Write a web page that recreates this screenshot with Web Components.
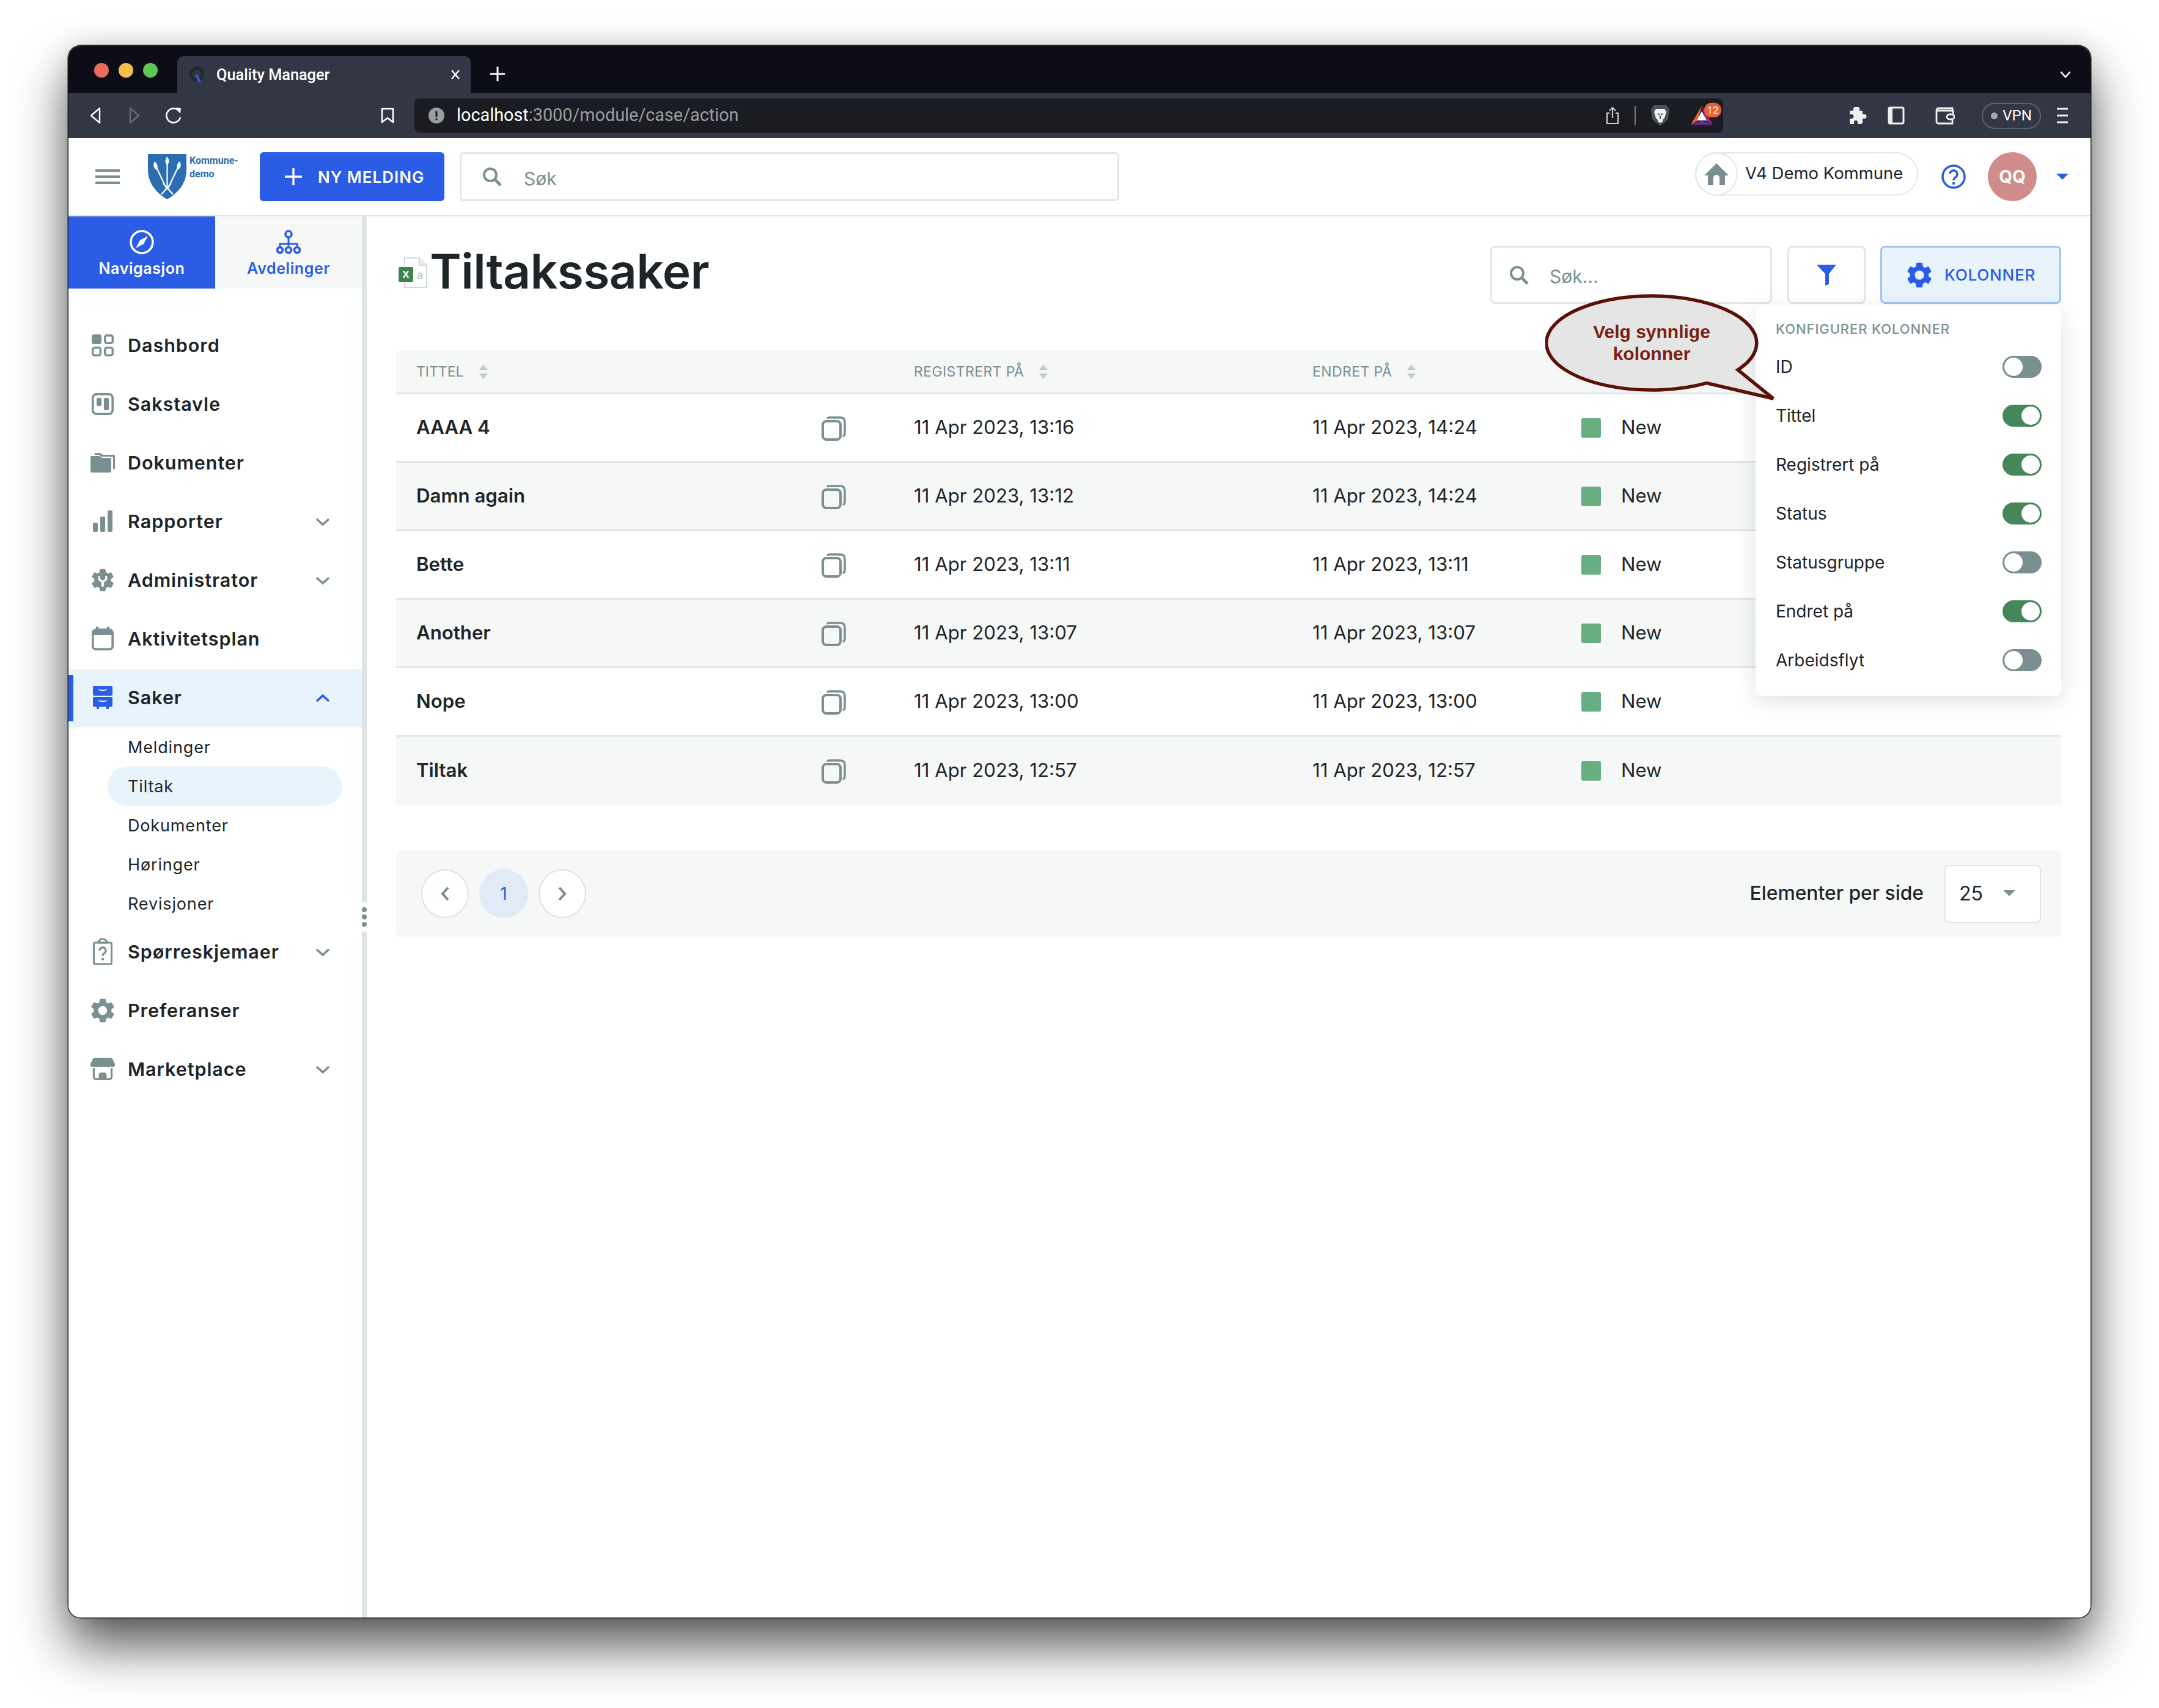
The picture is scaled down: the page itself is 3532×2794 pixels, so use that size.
<!DOCTYPE html>
<html lang="no">
<head>
<meta charset="utf-8">
<title>Quality Manager</title>
<style>
  html, body { margin: 0; padding: 0; background: #fff; }
  body { width: 3532px; height: 2794px; overflow: hidden; font-family: Inter, "Noto Sans", sans-serif; color: #1d2528; }
</style>
</head>
<body>
<browser-window></browser-window>

<script>
(function(){
    const GEAR = 'M19.14 12.94c.04-.3.06-.61.06-.94 0-.32-.02-.64-.07-.94l2.03-1.58c.18-.14.23-.41.12-.61l-1.92-3.32c-.12-.22-.37-.29-.59-.22l-2.39.96c-.5-.38-1.03-.7-1.62-.94l-.36-2.54c-.04-.24-.24-.41-.48-.41h-3.84c-.24 0-.43.17-.47.41l-.36 2.54c-.59.24-1.13.57-1.62.94l-2.39-.96c-.22-.08-.47 0-.59.22L2.74 8.87c-.12.21-.08.47.12.61l2.03 1.58c-.05.3-.09.63-.09.94s.02.64.07.94l-2.03 1.58c-.18.14-.23.41-.12.61l1.92 3.32c.12.22.37.29.59.22l2.39-.96c.5.38 1.03.7 1.62.94l.36 2.54c.05.24.24.41.48.41h3.84c.24 0 .44-.17.47-.41l.36-2.54c.59-.24 1.13-.56 1.62-.94l2.39.96c.22.08.47 0 .59-.22l1.92-3.32c.12-.22.07-.47-.12-.61l-2.01-1.58zM12 15.6c-1.98 0-3.6-1.62-3.6-3.6s1.62-3.6 3.6-3.6 3.6 1.62 3.6 3.6-1.62 3.6-3.6 3.6z';

    function define(name, html, init) {
        const template = document.createElement('template');
        template.innerHTML = html;
        window.customElements.define(name, class extends HTMLElement {
            constructor() {
                super();
                this.attachShadow({mode: 'open'});
                this.shadowRoot.appendChild(template.content.cloneNode(true));
            }
            connectedCallback() {
                if (init) init(this, this.shadowRoot);
            }
        });
    }

    define('browser-window', `
        <style>
            :host{
                display: block;
                width: 3308px;
                height: 2571px;
                margin: 75px 0 0 112px;
                border-radius: 20px;
                background: #fff;
                box-shadow: 0 0 0 1.5px #1a1a1a, 0 46px 84px rgba(0,0,0,.66), 0 0 40px rgba(0,0,0,.12);
                overflow: hidden;
            }
            .frame{ display: flex; flex-direction: column; height: 100%; border-radius: 20px; overflow: hidden; }
        </style>
        <div class="frame">
            <browser-chrome></browser-chrome>
            <app-shell></app-shell>
        </div>
    `);

    define('browser-chrome', `
        <style>
            :host{ display: block; font-family: Roboto, "Liberation Sans", sans-serif; color: #fff; }
            .strip{ height: 77px; background: #0c0d17; display: flex; align-items: flex-end; position: relative; }
            .lights{ display: flex; gap: 16px; margin: 0 0 25px 42px; width: 136px; align-self: flex-end; }
            .lights i{ width: 24px; height: 24px; border-radius: 50%; display: block; }
            .tab{ width: 480px; height: 60px; background: #333645; border-radius: 10px 10px 0 0; display: flex; align-items: center; box-sizing: border-box; padding: 0 0 0 20px; font-size: 25.3px; font-weight: 500; }
            .tab span{ margin-left: 20px; flex: 1; }
            .tab svg:last-child{ margin-right: 16px; }
            .plus{ margin: 0 0 19px 32px; }
            .more{ margin: 0 32px 24px auto; }
            .bar{ height: 74px; background: #333645; display: flex; align-items: center; }
            .url{ width: 2141px; height: 56px; margin-left: 32px; background: #1b1c21; border-radius: 8px; display: flex; align-items: center; box-sizing: border-box; padding: 0 17px 0 23px; font-size: 28.8px; position: relative; }
            .url b{ font-weight: 400; margin-left: 20px; margin-top: -2px; }
            .url em{ font-style: normal; color: #9a9ca3; }
            .url .end{ margin-left: auto; display: flex; align-items: center; }
            .sep{ width: 2px; height: 32px; background: #777a84; margin: 0 24px 0 25px; }
            .bat{ position: relative; margin-left: 34px; width: 36px; height: 32px; }
            .bat u{ position: absolute; left: 22px; top: -5px; width: 28px; height: 24px; border-radius: 12px; background: #ee6039; font-size: 17px; line-height: 24px; text-align: center; text-decoration: none; }
            .vpn{ width: 97px; height: 43px; box-sizing: border-box; border: 2px solid #5d606e; border-radius: 22px; display: flex; align-items: center; justify-content: center; gap: 8px; font-size: 24px; }
            .vpn i{ width: 11px; height: 11px; border-radius: 50%; background: #a5a8b4; display: block; }
        </style>
        <div class="strip">
            <div class="lights"><i style="background:#ec6a5e"></i><i style="background:#f4bf4f"></i><i style="background:#61c554"></i></div>
            <div class="tab">
                <svg width="24" height="28" viewBox="0 0 24 28"><circle cx="12" cy="13" r="9.5" fill="none" stroke="#23252d" stroke-width="5"/><path d="M11 15l6 11" stroke="#2b5ce6" stroke-width="4"/></svg>
                <span>Quality Manager</span>
                <svg width="18" height="18" viewBox="0 0 18 18"><path d="M3 2l12 14M15 2L3 16" stroke="#fff" stroke-width="2.4"/></svg>
            </div>
            <svg class="plus" width="24" height="24" viewBox="0 0 24 24"><path d="M12 0v24M0 12h24" stroke="#fff" stroke-width="3"/></svg>
            <svg class="more" width="18" height="12" viewBox="0 0 18 12"><path d="M1.5 1.5L9 10l7.5-8.5" fill="none" stroke="#fff" stroke-width="2.6"/></svg>
        </div>
        <div class="bar">
            <svg style="margin-left:30px" width="28" height="26" viewBox="0 0 28 26"><path d="M21 1L7 13l14 12z" fill="none" stroke="#fff" stroke-width="2.4" stroke-linejoin="round"/></svg>
            <svg style="margin-left:36px" width="28" height="26" viewBox="0 0 28 26"><path d="M7 1l14 12L7 25z" fill="none" stroke="#686b77" stroke-width="2.4" stroke-linejoin="round"/></svg>
            <svg style="margin-left:36px" width="28" height="28" viewBox="0 0 28 28"><path d="M23 7A11.5 11.5 0 1 0 25 17" fill="none" stroke="#fff" stroke-width="2.6"/><path d="M17 1l9 1-1 9z" fill="#fff"/></svg>
            <svg style="margin-left:324px" width="24" height="26" viewBox="0 0 24 26"><path d="M3 2h18v22l-9-7-9 7z" fill="none" stroke="#fff" stroke-width="2.6" stroke-linejoin="round"/></svg>
            <div class="url">
                <svg width="26" height="26" viewBox="0 0 26 26"><circle cx="13" cy="13" r="13" fill="#9a9ca3"/><path d="M13 6v9M13 17.5v3" stroke="#1b1c21" stroke-width="3"/></svg>
                <b>localhost<em>:3000/module/case/action</em></b>
                <div class="end">
                    <svg width="22" height="30" viewBox="0 0 22 30"><path d="M6 11H2v17h18V11h-4M11 19V2M6 7l5-5 5 5" fill="none" stroke="#cfd0d4" stroke-width="2.2"/></svg>
                    <div class="sep"></div>
                    <svg width="32" height="36" viewBox="0 0 32 36"><path d="M6 1h20l5 7-2 16-13 11L3 24 1 8z" fill="#4d505d"/><path d="M9 7h14l3 5-3 10-3 3v3l-4 2-4-2v-3l-3-3-3-10z" fill="#f4f4f4"/><path d="M12 15l3 1.5M20 15l-3 1.5M16 18v6" stroke="#4d505d" stroke-width="2" fill="none"/></svg>
                    <div class="bat">
                        <svg width="36" height="32" viewBox="0 0 36 32"><path d="M18 0L0 31l12-7z" fill="#ef5f34"/><path d="M18 0l18 31-12-7z" fill="#9b2d83"/><path d="M0 31h36L18 24z" fill="#662d91"/><path d="M18 9l8 15H10z" fill="#fff"/></svg>
                        <u>12</u>
                    </div>
                </div>
            </div>
            <svg style="margin-left:205px" width="30" height="30" viewBox="0 0 30 30"><path d="M11 1h5a2 2 0 0 1 2 2v4h4l1 1v5h3a3 3 0 0 1 0 7h-3v7l-2 2h-6v-3a3 3 0 0 0-6 0v3H3l-1-2v-7h3a3 3 0 0 0 0-7H2V8l1-1h5V4a3 3 0 0 1 3-3z" fill="#f0f0f0"/></svg>
            <svg style="margin-left:34px" width="28" height="30" viewBox="0 0 28 30"><rect x="2" y="2" width="24" height="26" rx="2" fill="none" stroke="#f0f0f0" stroke-width="3"/><rect x="2" y="2" width="6" height="26" fill="#f0f0f0"/></svg>
            <svg style="margin-left:50px" width="32" height="30" viewBox="0 0 32 30"><path d="M28 8V3H5a3 3 0 0 0-3 3v19a3 3 0 0 0 3 3h23v-6M2 7h27v8" fill="none" stroke="#f0f0f0" stroke-width="2.8"/><rect x="19" y="13" width="12" height="8" rx="4" fill="none" stroke="#f0f0f0" stroke-width="2.8"/></svg>
            <div class="vpn" style="margin-left:44px"><i></i>VPN</div>
            <svg style="margin-left:21px" width="28" height="26" viewBox="0 0 18 26"><path d="M0 2h18M0 13h18M0 24h18" stroke="#f0f0f0" stroke-width="3"/></svg>
        </div>
    `);

    define('app-shell', `
        <style>
            :host{ display: flex; flex-direction: column; flex: 1; min-height: 0; }
            .body{ display: flex; flex: 1; min-height: 0; }
        </style>
        <app-header></app-header>
        <div class="body">
            <side-nav></side-nav>
            <cases-page></cases-page>
        </div>
    `);

    define('app-header', `
        <style>
            :host{ display: flex; align-items: center; height: 128px; box-sizing: border-box; border-bottom: 2px solid #e2e6e6; background: #fff; font-family: Inter, sans-serif; }
            .burger{ width: 40px; height: 24px; margin-left: 44px; display: flex; flex-direction: column; justify-content: space-between; }
            .burger i{ display: block; height: 4px; background: #7a8f90; }
            .logo{ margin-left: 46px; display: flex; align-items: flex-start; width: 183px; }
            .logo span{ font: 700 16px/22px Roboto, sans-serif; color: #2a6db0; margin: 0 0 0 5px; }
            .new{ width: 302px; height: 80px; background: #2b5ce6; color: #fff; border-radius: 6px; display: flex; align-items: center; gap: 26px; box-sizing: border-box; padding-left: 41px; font-size: 26px; font-weight: 600; letter-spacing: 1px; }
            .search{ width: 1079px; height: 80px; margin-left: 25px; box-sizing: border-box; border: 3px solid #e2e6e6; border-radius: 6px; display: flex; align-items: center; padding-left: 34px; color: #7a8f90; font-size: 30px; }
            .search span{ margin-left: 36px; padding-top: 6px; }
            .right{ margin-left: auto; display: flex; align-items: center; }
            .org{ width: 365px; height: 71px; box-sizing: border-box; border: 2.5px solid #e4e6e6; border-radius: 36px; display: flex; align-items: center; margin-top: -9px; font-size: 27.5px; color: #1d2528; }
            .home{ width: 70px; height: 71px; flex: none; margin-left: -2px; box-sizing: border-box; border: 2.5px solid #e4e6e6; border-radius: 50%; display: flex; align-items: center; justify-content: center; }
            .org span{ margin-left: 12px; white-space: nowrap; margin-top: -4px; }
            .help{ margin-left: 38px; }
            .avatar{ width: 80px; height: 80px; border-radius: 50%; background: #d08b8b; color: #fff; font-size: 28px; font-weight: 700; display: flex; align-items: center; justify-content: center; margin-left: 36px; }
            .caret{ margin: 0 36px 0 32px; }
        </style>
        <div class="burger"><i></i><i></i><i></i></div>
        <div class="logo">
            <svg width="63" height="74" viewBox="0 0 63 74"><path d="M0 0h63v26c0 22-14 38-31.5 48C14 64 0 48 0 26z" fill="#2a6db0"/><path d="M31.5 14v44M14 22l17 36M49 22L32 58M22 66l16-18M41 66L25 48" stroke="#fff" stroke-width="2.2" fill="none"/><path d="M31.5 4c4 6 4 10 0 14-4-4-4-8 0-14zM11 12c5 4 6 9 3 14-5-3-6-9-3-14zM52 12c-5 4-6 9-3 14 5-3 6-9 3-14z" fill="#fff"/></svg>
            <span>Kommune-<br>demo</span>
        </div>
        <div class="new">
            <svg width="28" height="28" viewBox="0 0 28 28"><path d="M14 0v28M0 14h28" stroke="#fff" stroke-width="3.4"/></svg>
            NY MELDING
        </div>
        <div class="search">
            <search-glyph></search-glyph>
            <span>Søk</span>
        </div>
        <div class="right">
            <div class="org">
                <div class="home"><svg width="40" height="36" viewBox="0 0 40 36"><path d="M20 0l20 20h-6v16h-9V24a5 5 0 0 0-10 0v12H6V20H0z" fill="#7a8f90"/></svg></div>
                <span>V4 Demo Kommune</span>
            </div>
            <svg class="help" width="40" height="40" viewBox="0 0 40 40"><circle cx="20" cy="20" r="18" fill="none" stroke="#2b5ce6" stroke-width="3.6"/><path d="M14 15.5a6 6 0 1 1 9 5.5c-2 1.2-3 2.2-3 5" fill="none" stroke="#2b5ce6" stroke-width="3.4"/><circle cx="20" cy="31" r="2.2" fill="#2b5ce6"/></svg>
            <div class="avatar">QQ</div>
            <svg class="caret" width="20" height="10" viewBox="0 0 20 10"><path d="M0 0h20L10 10z" fill="#2b5ce6"/></svg>
        </div>
    `);

    define('search-glyph', `
        <style>:host{ display: inline-flex; }</style>
        <svg width="32" height="32" viewBox="0 0 32 32"><circle cx="13" cy="13" r="10" fill="none" stroke="#7a8f90" stroke-width="4"/><path d="M20 20l10 10" stroke="#7a8f90" stroke-width="5"/></svg>
    `);

    define('nav-chevron', `
        <style>:host{ display: inline-flex; width: 24px; }</style>
        <svg width="24" height="14" viewBox="0 0 24 14"><path d="M2 2l10 9 10-9" fill="none" stroke="currentColor" stroke-width="3.6"/></svg>
    `);

    define('nav-item', `
        <style>
            :host{ display: flex; align-items: center; height: 96px; box-sizing: border-box; padding: 0 52px 3px 36px; font-size: 30.5px; font-weight: 600; letter-spacing: .95px; color: #1d2528; position: relative; }
            :host([active]){ background: #e7f4fc; }
            :host([active])::before{ content: ""; position: absolute; left: 0; top: 10px; bottom: 10px; width: 8px; background: #2b5ce6; }
            .icon{ width: 40px; display: flex; justify-content: center; align-items: center; margin-right: 21px; flex: none; color: #7a8f90; }
            :host([active]) .icon{ color: #2b5ce6; }
            .text{ flex: 1; }
            nav-chevron{ color: #7a8f90; margin-top: 3px; }
            :host([active]) nav-chevron{ color: #2b5ce6; transform: rotate(180deg); }
            :host(:not([chevron])) nav-chevron{ display: none; }
        </style>
        <div class="icon"><slot name="icon"></slot></div>
        <div class="text"><slot></slot></div>
        <nav-chevron></nav-chevron>
    `);

    define('sub-item', `
        <style>
            :host{ display: flex; align-items: center; height: 64px; width: 384px; margin-left: 64px; box-sizing: border-box; padding-left: 33px; font-size: 27px; letter-spacing: .85px; color: #1d2528; border-radius: 32px; }
            :host([active]){ background: #e7f4fc; }
        </style>
        <slot></slot>
    `);

    define('side-nav', `
        <style>
            :host{ display: block; width: 488px; flex: none; box-sizing: border-box; border-right: 8px solid #dee3e3; position: relative; background: #fff; font-family: Inter, sans-serif; }
            .tabs{ display: flex; height: 118px; }
            .tab{ width: 240px; display: flex; flex-direction: column; align-items: center; padding-top: 22px; box-sizing: border-box; background: #f6f8f8; color: #2b5ce6; font-size: 25px; font-weight: 600; letter-spacing: .6px; }
            .tab.on{ background: #2b5ce6; color: #fff; }
            .tab svg{ margin-bottom: 8px; }
            .list{ padding-top: 46px; }
            .handle{ position: absolute; right: -8px; top: 1122px; width: 8px; height: 48px; background: #fff; display: flex; flex-direction: column; align-items: center; justify-content: center; gap: 4px; }
            .handle i{ width: 8px; height: 8px; border-radius: 50%; background: #7a8f90; display: block; }
        </style>
        <div class="tabs">
            <div class="tab on">
                <svg width="40" height="40" viewBox="0 0 40 40"><circle cx="20" cy="20" r="18" fill="none" stroke="#fff" stroke-width="3.6"/><path d="M30 10l-7 13-13 7 7-13z" fill="#fff"/></svg>
                Navigasjon
            </div>
            <div class="tab">
                <svg width="40" height="40" viewBox="0 0 40 40"><circle cx="20" cy="7" r="5" fill="none" stroke="#2b5ce6" stroke-width="3.6"/><path d="M20 12v14M6 28v-5h28v5" fill="none" stroke="#2b5ce6" stroke-width="3"/><circle cx="6" cy="33" r="4.5" fill="none" stroke="#2b5ce6" stroke-width="3.6"/><circle cx="20" cy="33" r="4.5" fill="none" stroke="#2b5ce6" stroke-width="3.6"/><circle cx="34" cy="33" r="4.5" fill="none" stroke="#2b5ce6" stroke-width="3.6"/></svg>
                Avdelinger
            </div>
        </div>
        <div class="list">
            <nav-item><svg slot="icon" width="36" height="36" viewBox="0 0 36 36"><rect width="16" height="16" rx="4" fill="currentColor"/><rect x="21.7" y="1.7" width="12.6" height="12.6" rx="3" fill="none" stroke="currentColor" stroke-width="3.4"/><rect x="1.7" y="21.7" width="12.6" height="12.6" rx="3" fill="none" stroke="currentColor" stroke-width="3.4"/><rect x="21.7" y="21.7" width="12.6" height="12.6" rx="3" fill="none" stroke="currentColor" stroke-width="3.4"/></svg>Dashbord</nav-item>
            <nav-item><svg slot="icon" width="36" height="36" viewBox="0 0 36 36"><rect x="1.8" y="1.8" width="32.4" height="32.4" rx="6" fill="none" stroke="currentColor" stroke-width="3.6"/><rect x="8" y="8" width="8" height="13" rx="2" fill="currentColor"/><rect x="20" y="8" width="8" height="20" rx="2" fill="currentColor"/></svg>Sakstavle</nav-item>
            <nav-item><svg slot="icon" width="40" height="32" viewBox="0 0 40 32"><path d="M7 0h9l4 3h20v23h-3V6H18l-4-3H7z" fill="currentColor"/><path d="M0 7a2 2 0 0 1 2-2h13l4 3h12a3 3 0 0 1 3 3v18a3 3 0 0 1-3 3H2a2 2 0 0 1-2-2z" fill="currentColor"/></svg>Dokumenter</nav-item>
            <nav-item chevron><svg slot="icon" width="32" height="35" viewBox="0 0 32 35"><rect y="20" width="8" height="15" rx="2" fill="currentColor"/><rect x="12" y="10" width="8" height="25" rx="2" fill="currentColor"/><rect x="24" width="8" height="35" rx="2" fill="currentColor"/></svg>Rapporter</nav-item>
            <nav-item chevron><svg slot="icon" width="40" height="38" viewBox="2 2 20 20"><path fill-rule="evenodd" d="${GEAR}" fill="currentColor"/><circle cx="12" cy="12" r="4.6" fill="currentColor"/><path d="M9 8.5v3l3 2 3-2v-3" fill="none" stroke="#fff" stroke-width="1.6"/><path d="M12 13v4.5" stroke="#fff" stroke-width="2.2"/></svg>Administrator</nav-item>
            <nav-item><svg slot="icon" width="36" height="39" viewBox="0 0 36 39"><rect x="1.8" y="5" width="32.4" height="32" rx="5" fill="none" stroke="currentColor" stroke-width="3.6"/><path d="M2 6h32v8H2z" fill="currentColor"/><path d="M9 0v6M27 0v6" stroke="currentColor" stroke-width="4"/></svg>Aktivitetsplan</nav-item>
            <nav-item active chevron><svg slot="icon" width="32" height="38" viewBox="0 0 32 38"><rect width="32" height="16" rx="2" fill="currentColor"/><rect y="18" width="32" height="16" rx="2" fill="currentColor"/><path d="M9 6c4 1.5 10 1.5 14 0M9 24c4 1.5 10 1.5 14 0" stroke="#fff" stroke-width="1.8" fill="none"/><rect x="6" y="34" width="4" height="4" fill="currentColor"/><rect x="22" y="34" width="4" height="4" fill="currentColor"/></svg>Saker</nav-item>
            <sub-item>Meldinger</sub-item>
            <sub-item active>Tiltak</sub-item>
            <sub-item>Dokumenter</sub-item>
            <sub-item>Høringer</sub-item>
            <sub-item>Revisjoner</sub-item>
            <nav-item chevron><svg slot="icon" width="32" height="44" viewBox="0 0 32 44"><rect x="1.5" y="7" width="29" height="35" rx="2" fill="none" stroke="currentColor" stroke-width="3"/><path d="M9 7a7 6 0 0 1 14 0z" fill="none" stroke="currentColor" stroke-width="3"/><path d="M11 20a5 5 0 1 1 7.5 4.3C17 25.3 16 26 16 28.5" fill="none" stroke="currentColor" stroke-width="3.2"/><circle cx="16" cy="34" r="2.2" fill="currentColor"/></svg>Spørreskjemaer</nav-item>
            <nav-item><svg slot="icon" width="42" height="42" viewBox="2 2 20 20"><path fill-rule="evenodd" d="${GEAR}" fill="currentColor"/></svg>Preferanser</nav-item>
            <nav-item chevron><svg slot="icon" width="44" height="40" viewBox="0 0 44 40"><path d="M7 0h30a4 4 0 0 1 3 2l4 9v3a5 5 0 0 1-7 1 7 7 0 0 1-8 0 7 7 0 0 1-7 0 7 7 0 0 1-8 0 5 5 0 0 1-7 0 5 5 0 0 1-7-1v-3l4-9a4 4 0 0 1 3-2z" fill="currentColor"/><path d="M6 18v16a4 4 0 0 0 4 4h24a4 4 0 0 0 4-4V18" fill="none" stroke="currentColor" stroke-width="3.6"/><path d="M15 38v-8a4 4 0 0 1 4-4h6a4 4 0 0 1 4 4v8z" fill="currentColor"/></svg>Marketplace</nav-item>
        </div>
        <div class="handle"><i></i><i></i><i></i></div>
    `);

    define('sort-arrows', `
        <style>:host{ display: inline-flex; margin-left: 24px; }</style>
        <svg width="16" height="24" viewBox="0 0 16 24"><path d="M8 0l7 9H1zM8 24l-7-9h14z" fill="#c3cccc"/></svg>
    `);

    define('copy-icon', `
        <style>:host{ display: inline-flex; margin-top: 2px; }</style>
        <svg width="40" height="40" viewBox="0 0 40 40"><rect x="2" y="8" width="29" height="30" rx="6" fill="none" stroke="#7a8f90" stroke-width="4"/><path d="M9 3.5c1-1 2-1.5 4-1.5h17c5 0 8 2.5 8 7v18c0 3-1 5-3 6" fill="none" stroke="#7a8f90" stroke-width="3.5"/></svg>
    `);

    const GRID = 'display: grid; grid-template-columns: 847px 652px 440px 1fr; align-items: center;';

    define('case-row', `
        <style>
            :host{ ${GRID} height: 112px; box-sizing: border-box; border-bottom: 3px solid #e0e5e5; font-size: 31.2px; color: #1d2528; background: #fff; }
            :host(:nth-child(even)){ background: #f6f8f8; }
            :host(:last-child){ border-bottom: 0; }
            .title{ display: flex; align-items: center; justify-content: space-between; padding: 0 111px 0 33px; font-weight: 600; }
            .title span{ margin-top: -2px; }
            .r, .c{ margin-top: -2px; }
            .status{ display: flex; align-items: center; gap: 33px; }
            .status span{ margin-top: -2px; }
            .status i{ width: 32px; height: 32px; border-radius: 3px; background: #68ae80; display: block; }
        </style>
        <div class="title"><span class="t"></span><copy-icon></copy-icon></div>
        <div class="r"></div>
        <div class="c"></div>
        <div class="status"><i></i><span>New</span></div>
    `, (el, root) => {
        root.querySelector('.t').textContent = el.getAttribute('title');
        root.querySelector('.r').textContent = el.getAttribute('registered');
        root.querySelector('.c').textContent = el.getAttribute('changed');
    });

    define('case-table', `
        <style>
            :host{ display: block; }
            .head{ ${GRID} height: 71px; background: #f6f8f8; border-bottom: 3px solid #e0e5e5; box-sizing: border-box; font-size: 23px; color: #7a8f90; letter-spacing: .4px; }
            .head > div{ display: flex; align-items: center; }
            .head > div:first-child{ padding-left: 33px; letter-spacing: 0; }
        </style>
        <div class="head">
            <div>TITTEL<sort-arrows></sort-arrows></div>
            <div>REGISTRERT PÅ<sort-arrows></sort-arrows></div>
            <div>ENDRET PÅ<sort-arrows></sort-arrows></div>
            <div>STATUS</div>
        </div>
        <div>
            <case-row title="AAAA 4" registered="11 Apr 2023, 13:16" changed="11 Apr 2023, 14:24"></case-row>
            <case-row title="Damn again" registered="11 Apr 2023, 13:12" changed="11 Apr 2023, 14:24"></case-row>
            <case-row title="Bette" registered="11 Apr 2023, 13:11" changed="11 Apr 2023, 13:11"></case-row>
            <case-row title="Another" registered="11 Apr 2023, 13:07" changed="11 Apr 2023, 13:07"></case-row>
            <case-row title="Nope" registered="11 Apr 2023, 13:00" changed="11 Apr 2023, 13:00"></case-row>
            <case-row title="Tiltak" registered="11 Apr 2023, 12:57" changed="11 Apr 2023, 12:57"></case-row>
        </div>
    `);

    define('pager-bar', `
        <style>
            :host{ display: flex; align-items: center; height: 144px; margin-top: 73px; background: #f6f8f8; border-radius: 10px; box-sizing: border-box; padding: 0 33px 0 41px; }
            .btn{ width: 78px; height: 80px; box-sizing: border-box; border: 2.5px solid #e0e2e2; border-radius: 50%; background: #fff; display: flex; align-items: center; justify-content: center; margin-right: 17px; }
            .cur{ width: 80px; background: #e0ebf5; border: 0; color: #2b5ce6; font-size: 28px; }
            .label{ margin: -4px 34px 0 auto; font-size: 31.8px; font-weight: 500; }
            .select{ width: 158px; height: 95px; box-sizing: border-box; border: 2.5px solid #e0e5e5; border-radius: 8px; background: #fff; display: flex; align-items: center; padding: 0 0 2px 22px; font-size: 32px; }
            .select svg{ margin-left: 33px; }
        </style>
        <div class="btn"><svg width="16" height="24" viewBox="0 0 16 24"><path d="M13 2L4 12l9 10" fill="none" stroke="#7a8f90" stroke-width="4"/></svg></div>
        <div class="btn cur">1</div>
        <div class="btn"><svg width="16" height="24" viewBox="0 0 16 24"><path d="M3 2l9 10-9 10" fill="none" stroke="#7a8f90" stroke-width="4"/></svg></div>
        <div class="label">Elementer per side</div>
        <div class="select">25<svg width="20" height="10" viewBox="0 0 20 10"><path d="M0 0h20L10 10z" fill="#7a8f90"/></svg></div>
    `);

    define('column-toggle', `
        <style>
            :host{ display: flex; align-items: center; justify-content: space-between; height: 80px; font-size: 28px; color: #1d2528; }
            .sw{ width: 64px; height: 36px; box-sizing: border-box; border: 3px solid #7a8f90; border-radius: 18px; background: #7a8f90; display: flex; align-items: center; }
            .sw i{ width: 30px; height: 30px; border-radius: 50%; background: #fff; display: block; }
            :host([on]) .sw{ background: #46875a; border-color: #46875a; justify-content: flex-end; }
        </style>
        <slot></slot>
        <div class="sw"><i></i></div>
    `);

    define('column-menu', `
        <style>
            :host{ display: block; position: absolute; right: 48px; top: 146px; width: 500px; height: 638px; box-sizing: border-box; padding: 21px 32px 0 33px; background: #fff; border-radius: 8px; box-shadow: 0 10px 36px rgba(60,80,80,.16); }
            h4{ margin: 0 0 5px; font-size: 22px; line-height: 34px; font-weight: 500; color: #7a8f90; letter-spacing: .9px; }
        </style>
        <h4>KONFIGURER KOLONNER</h4>
        <column-toggle>ID</column-toggle>
        <column-toggle on>Tittel</column-toggle>
        <column-toggle on>Registrert på</column-toggle>
        <column-toggle on>Status</column-toggle>
        <column-toggle>Statusgruppe</column-toggle>
        <column-toggle on>Endret på</column-toggle>
        <column-toggle>Arbeidsflyt</column-toggle>
    `);

    define('speech-callout', `
        <style>
            :host{ display: block; position: absolute; left: 1928px; top: 126px; width: 380px; height: 180px; }
            svg{ position: absolute; left: 0; top: 0; }
            .text{ position: absolute; left: 0; width: 348px; top: 45px; text-align: center; font: 700 30px/36px "Liberation Sans", Arial, sans-serif; color: #7c1f10; }
        </style>
        <svg width="380" height="180" viewBox="0 0 380 180"><path d="M264 146.6L373 172 315 125A172 77 0 1 0 264 146.6z" fill="#e5e5e5" stroke="#5c1108" stroke-width="5.5" stroke-linejoin="miter"/></svg>
        <div class="text">Velg synnlige<br>kolonner</div>
    `);

    define('cases-page', `
        <style>
            :host{ display: block; flex: 1; box-sizing: border-box; padding: 48px 48px 0; position: relative; background: #fff; font-family: Inter, sans-serif; color: #1d2528; }
            .top{ display: flex; align-items: flex-start; height: 95px; margin-bottom: 77px; }
            .file{ margin: 19px 3px 0 4px; flex: none; }
            h1{ margin: -6px 0 0; font-size: 78.4px; line-height: 95px; font-weight: 600; letter-spacing: -.5px; }
            .find{ width: 461px; height: 95px; margin-left: auto; box-sizing: border-box; border: 3px solid #e0e5e5; border-radius: 8px; display: flex; align-items: center; padding-left: 28px; color: #7a8f90; font-size: 30px; }
            .find span{ margin-left: 34px; padding-top: 4px; }
            .filter{ width: 128px; height: 95px; margin-left: 25px; box-sizing: border-box; border: 3px solid #e0e5e5; border-radius: 8px; display: flex; align-items: center; justify-content: center; }
            .cols{ width: 296px; height: 95px; margin-left: 24px; box-sizing: border-box; border: 3px solid #9cc3f0; border-radius: 8px; background: #e8f3fc; display: flex; align-items: center; padding-left: 40px; gap: 20px; color: #2b5ce6; font-size: 26px; font-weight: 500; letter-spacing: .8px; }
        </style>
        <div class="top">
            <svg class="file" width="48" height="50" viewBox="0 0 48 50">
                <path d="M10 1h24l12 12v36H10z" fill="#fff" stroke="#c9cccc" stroke-width="1.5"/><path d="M34 1v12h12" fill="#eee" stroke="#c9cccc" stroke-width="1.5"/>
                <rect x="0" y="16" width="24" height="24" rx="2" fill="#3e8451"/>
                <text x="12" y="34" text-anchor="middle" font-family="Liberation Sans" font-weight="700" font-size="17" fill="#fff">X</text>
                <text x="30" y="35" font-family="Liberation Sans" font-style="italic" font-size="18" fill="#a3cfa9">a</text>
            </svg>
            <h1>Tiltakssaker</h1>
            <div class="find"><search-glyph></search-glyph><span>Søk...</span></div>
            <div class="filter"><svg width="32" height="34" viewBox="0 0 32 34"><path d="M0 0h32L20 15v17l-6 2V15z" fill="#2b5ce6"/></svg></div>
            <div class="cols">
                <svg width="42" height="42" viewBox="2 2 20 20"><path fill-rule="evenodd" d="${GEAR}" fill="#2b5ce6"/></svg>
                KOLONNER
            </div>
        </div>
        <case-table></case-table>
        <pager-bar></pager-bar>
        <column-menu></column-menu>
        <speech-callout></speech-callout>
    `);
})();
</script>
</body>
</html>
